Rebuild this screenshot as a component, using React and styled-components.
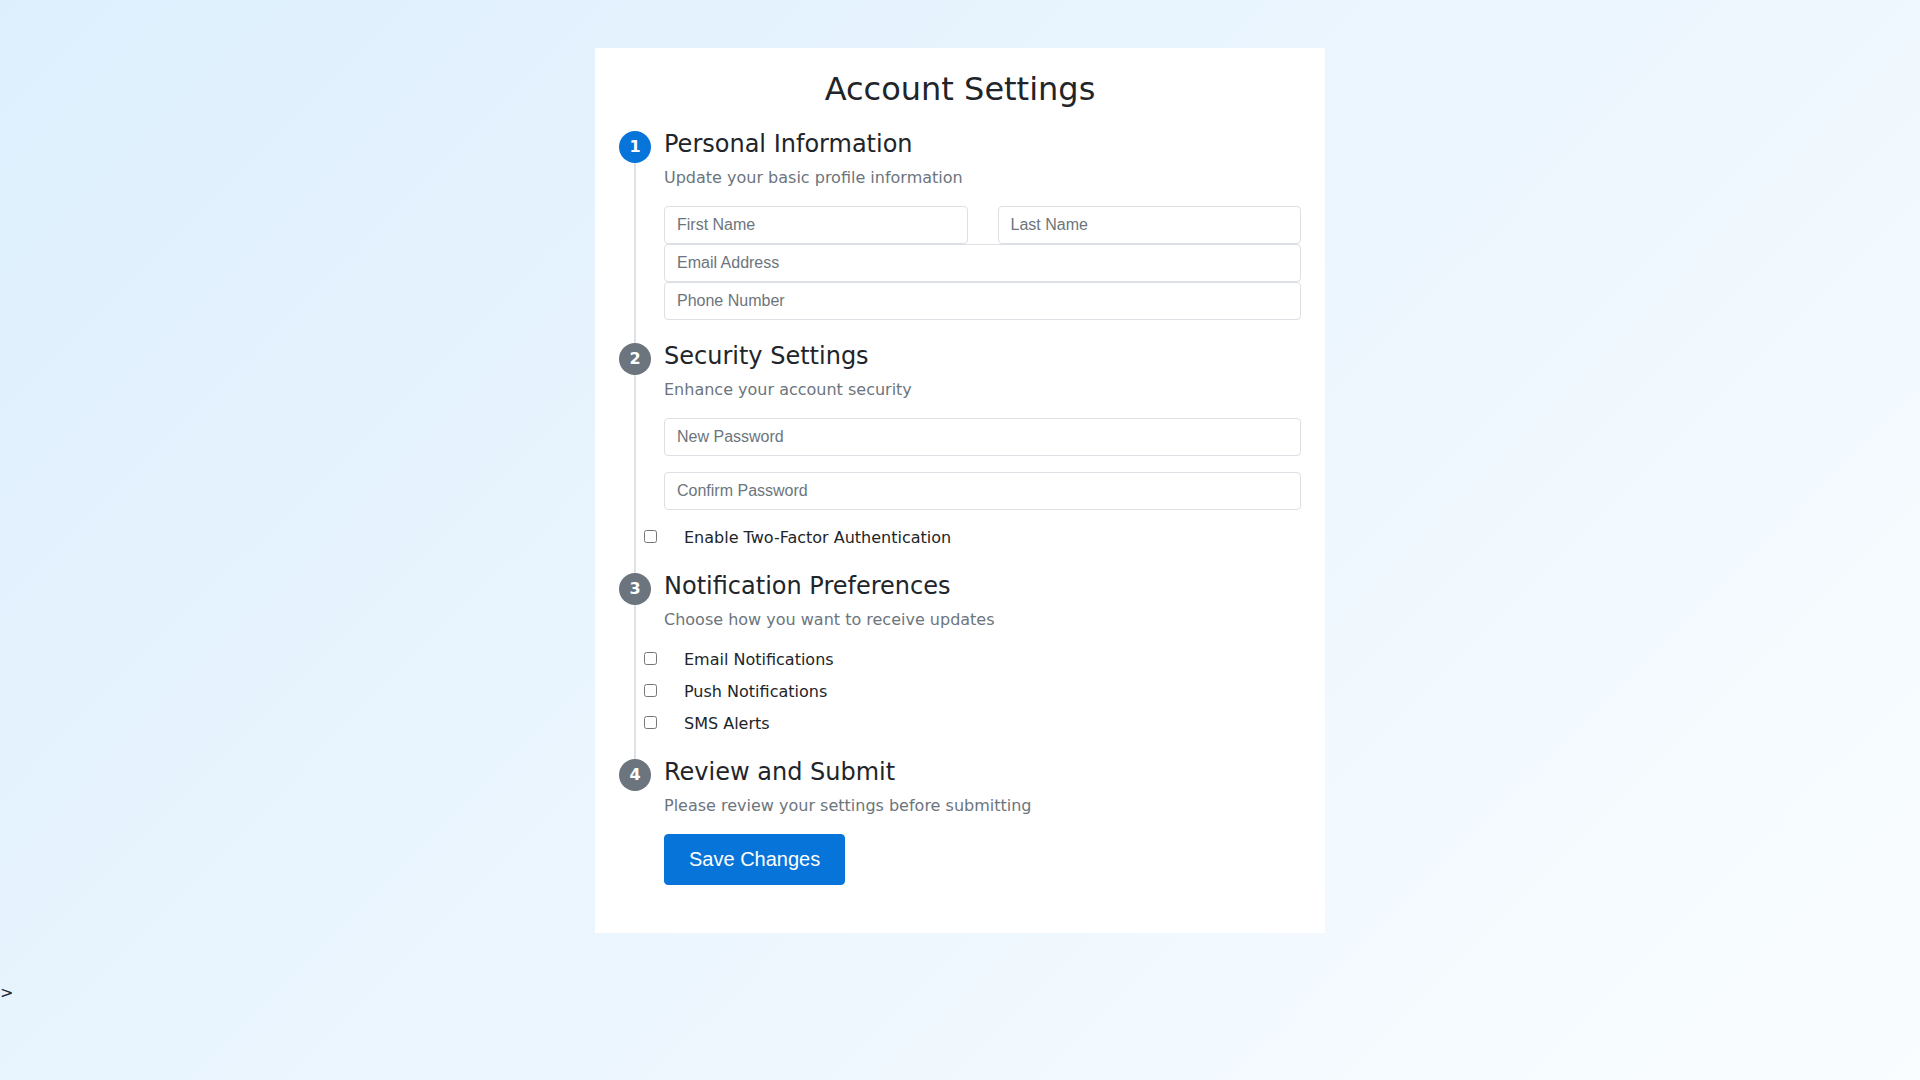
import styled, { createGlobalStyle } from "styled-components";

const GlobalStyle = createGlobalStyle`
  html, body {
    margin: 0;
    min-height: 100%;
  }
  html {
    height: 100%;
  }
  body {
    background: linear-gradient(135deg, #ddeffd 0%, #eaf5fe 45%, #fafdff 100%);
    font-family: "DejaVu Sans", sans-serif;
    font-size: 16px;
    line-height: 1.5;
    color: #212529;
  }
  *, *::before, *::after {
    box-sizing: border-box;
  }
`;

const Page = styled.div`
  display: flex;
  justify-content: center;
  padding: 48px 0;
`;

const Card = styled.div`
  width: 730px;
  background: #ffffff;
  padding: 22px 24px 27px;
`;

const Title = styled.h2`
  margin: 0 0 21px;
  font-size: 32px;
  font-weight: 400;
  line-height: 1.2;
  text-align: center;
  color: #212529;
`;

const Step = styled.div`
  position: relative;
  display: flex;
  gap: 13px;
  margin-bottom: 21px;

  &:not(:last-child)::before {
    content: "";
    position: absolute;
    left: 15px;
    top: 16px;
    bottom: -40px;
    width: 2px;
    background: #dee2e6;
  }
`;

const Badge = styled.div`
  position: relative;
  z-index: 1;
  flex: 0 0 32px;
  width: 32px;
  height: 32px;
  margin-top: 2px;
  border-radius: 50%;
  background: ${(p) => (p.$active ? "#0774da" : "#6c757d")};
  color: #ffffff;
  font-weight: 700;
  font-size: 16px;
  line-height: 32px;
  text-align: center;
`;

const StepBody = styled.div`
  flex: 1;
  min-width: 0;
`;

const StepTitle = styled.h4`
  margin: 1px 0 7px;
  font-size: 24px;
  font-weight: 400;
  line-height: 1.2;
  color: #212529;
`;

const StepText = styled.p`
  margin: 0 0 16px;
  color: #6c757d;
`;

const NameRow = styled.div`
  display: grid;
  grid-template-columns: 1fr 1fr;
  gap: 30px;
`;

const Input = styled.input`
  display: block;
  width: 100%;
  height: 38px;
  margin: 0 0 ${(p) => (p.$spaced ? "16px" : "0")};
  padding: 6px 12px;
  border: 1px solid #dcdfe3;
  border-radius: 4px;
  background: #fff;
  font-family: "Liberation Sans", Arial, sans-serif;
  font-size: 16px;
  color: #212529;
  outline: none;

  &::placeholder {
    color: #6c757d;
  }
`;

const CheckRow = styled.label`
  display: flex;
  align-items: flex-start;
  margin-left: -20px;
  margin-bottom: ${(p) => (p.$last ? "0" : "8px")};
  line-height: 24px;
  color: #212529;

  input {
    width: 13px;
    height: 13px;
    margin: 4px 27px 0 0;
    flex: 0 0 13px;
  }
`;

const SaveButton = styled.button`
  display: inline-block;
  padding: 10px 24px;
  border: 1px solid #0774da;
  border-radius: 4px;
  background: #0774da;
  color: #ffffff;
  font-family: "Liberation Sans", Arial, sans-serif;
  font-size: 20px;
  line-height: 29px;
  cursor: pointer;
`;

const Stray = styled.div`
  line-height: 24px;
`;

const CheckItem = ({ label, last }) => (
  <CheckRow $last={last}>
    <input type="checkbox" />
    <span>{label}</span>
  </CheckRow>
);

export default function App() {
  return (
    <>
      <GlobalStyle />
      <Page>
        <Card>
          <Title>Account Settings</Title>

          <Step>
            <Badge $active>1</Badge>
            <StepBody>
              <StepTitle>Personal Information</StepTitle>
              <StepText>Update your basic profile information</StepText>
              <NameRow>
                <Input placeholder="First Name" />
                <Input placeholder="Last Name" />
              </NameRow>
              <Input type="email" placeholder="Email Address" />
              <Input type="tel" placeholder="Phone Number" />
            </StepBody>
          </Step>

          <Step>
            <Badge>2</Badge>
            <StepBody>
              <StepTitle>Security Settings</StepTitle>
              <StepText>Enhance your account security</StepText>
              <Input type="password" placeholder="New Password" $spaced />
              <Input type="password" placeholder="Confirm Password" $spaced />
              <CheckItem label="Enable Two-Factor Authentication" last />
            </StepBody>
          </Step>

          <Step>
            <Badge>3</Badge>
            <StepBody>
              <StepTitle>Notification Preferences</StepTitle>
              <StepText>Choose how you want to receive updates</StepText>
              <CheckItem label="Email Notifications" />
              <CheckItem label="Push Notifications" />
              <CheckItem label="SMS Alerts" last />
            </StepBody>
          </Step>

          <Step>
            <Badge>4</Badge>
            <StepBody>
              <StepTitle>Review and Submit</StepTitle>
              <StepText>Please review your settings before submitting</StepText>
              <SaveButton type="button">Save Changes</SaveButton>
            </StepBody>
          </Step>
        </Card>
      </Page>
      <Stray>&gt;</Stray>
    </>
  );
}
